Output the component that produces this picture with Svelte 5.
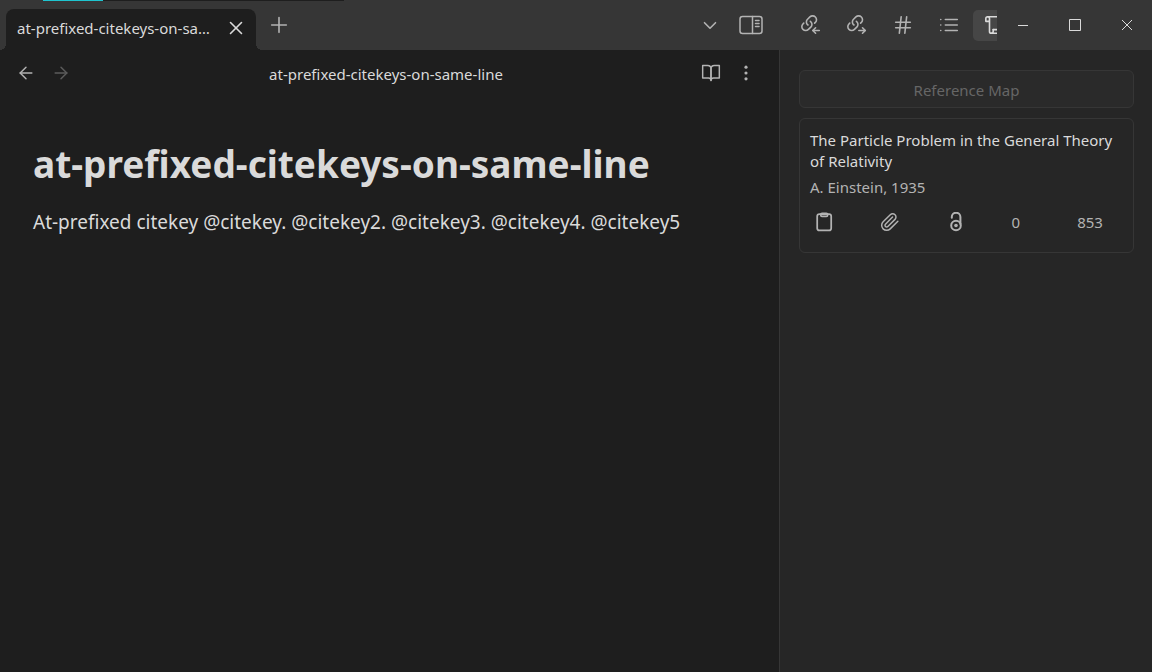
<script>
  const noteTitle = 'at-prefixed-citekeys-on-same-line';
  const body = 'At-prefixed citekey @citekey. @citekey2. @citekey3. @citekey4. @citekey5';

  const upperLink =
    'M8.7 12C8.22 11.64 7.81 11.18 7.52 10.65C7.23 10.13 7.05 9.55 7.01 8.95C6.97 8.35 7.06 7.75 7.27 7.18C7.48 6.62 7.81 6.11 8.25 5.69L10.8 3.18C11.6 2.41 12.67 1.99 13.79 2C14.9 2.01 15.97 2.45 16.76 3.23C17.54 4 17.99 5.05 18 6.15C18.01 7.25 17.58 8.31 16.81 9.09L15.9 10';
  const lowerLink =
    'M11.3 8C11.78 8.36 12.19 8.82 12.48 9.35C12.77 9.87 12.95 10.45 12.99 11.05C13.03 11.65 12.95 12.25 12.73 12.82C12.52 13.38 12.19 13.89 11.75 14.31L9.2 16.82C8.4 17.59 7.33 18.01 6.21 18C5.1 17.99 4.03 17.55 3.25 16.77C2.46 16 2.01 14.95 2 13.85C1.99 12.75 2.42 11.69 3.19 10.91L4.1 10';

  const panels = [
    { name: 'Backlinks', paths: [upperLink, lowerLink, 'M17 21L14 18L17 15', 'M21 18H14'] },
    { name: 'Outgoing links', paths: [upperLink, lowerLink, 'M18 21L21 18L18 15', 'M21 18H14'] },
    { name: 'Tags', paths: ['M4 9h16', 'M4 15h16', 'M10 3L8 21', 'M16 3l-2 18'] },
    { name: 'Outline', paths: ['M8 6h13', 'M8 12h13', 'M8 18h13', 'M3 6h.01', 'M3 12h.01', 'M3 18h.01'] },
    {
      name: 'References',
      active: true,
      paths: [
        'M10 17v2a2 2 0 0 1-4 0V5a2 2 0 0 0-4 0v3h3',
        'M22 17v2a2 2 0 0 1-2 2H8',
        'M19 17V5a2 2 0 0 0-2-2H4',
        'M22 17H10'
      ]
    }
  ];
</script>

{#snippet icon(paths, size)}
  <svg width={size} height={size} viewBox="0 0 24 24" aria-hidden="true">
    {#each paths as d}<path {d} />{/each}
  </svg>
{/snippet}

<div class="app">
  <header class="titlebar">
    <div class="progress"><span></span></div>
    <div class="tabs">
      <div class="tab">
        <span class="tab-title">{noteTitle}</span>
        <button class="tab-close" aria-label="Close tab">{@render icon(['M18 6L6 18', 'M6 6l12 12'], 22)}</button>
      </div>
      <button class="new-tab" aria-label="New tab">{@render icon(['M12 4v16', 'M4 12h16'], 22)}</button>
      <div class="tab-tools">
        <button aria-label="Tab list">{@render icon(['M6 9.5l6 6l6-6'], 22)}</button>
        <button aria-label="Toggle sidebar">
          <svg width="24" height="20" viewBox="0 0 24 20" aria-hidden="true">
            <rect x="1" y="1.5" width="22" height="17" rx="2.5" />
            <path d="M13.5 1.5v17M16.5 5.5h3.5M16.5 8.5h3.5M16.5 11.5h3.5" />
          </svg>
        </button>
      </div>
    </div>
    <div class="side-head">
      <nav class="panels" aria-label="Sidebar panels">
        {#each panels as p}
          <button class:active={p.active} aria-label={p.name}>{@render icon(p.paths, 22)}</button>
        {/each}
      </nav>
      <div class="window-controls">
        <button aria-label="Minimize"><svg width="12" height="12" viewBox="0 0 12 12"><path d="M1 6.5h10" /></svg></button>
        <button aria-label="Maximize"><svg width="12" height="12" viewBox="0 0 12 12"><path d="M.5 .5h11v11h-11z" /></svg></button>
        <button aria-label="Close"><svg width="12" height="12" viewBox="0 0 12 12"><path d="M1 1l10 10M11 1L1 11" /></svg></button>
      </div>
    </div>
  </header>

  <div class="workspace">
    <main>
      <div class="view-header">
        <div class="nav">
          <button aria-label="Back">{@render icon(['M19 12H5', 'M12 19l-7-7l7-7'], 20)}</button>
          <button aria-label="Forward" disabled>{@render icon(['M5 12h14', 'M12 5l7 7l-7 7'], 20)}</button>
        </div>
        <div class="view-title">{noteTitle}</div>
        <div class="nav end">
          <button aria-label="Reading view">{@render icon(['M2 3h6a4 4 0 0 1 4 4v14a3 3 0 0 0-3-3H2z', 'M22 3h-6a4 4 0 0 0-4 4v14a3 3 0 0 1 3-3h7z'], 20)}</button>
          <button aria-label="More options">
            <svg class="dots" width="20" height="20" viewBox="0 0 24 24" aria-hidden="true">
              <circle cx="12" cy="5" r="1.9" /><circle cx="12" cy="12" r="1.9" /><circle cx="12" cy="19" r="1.9" />
            </svg>
          </button>
        </div>
      </div>
      <article>
        <h1>{noteTitle}</h1>
        <p>{body}</p>
      </article>
    </main>

    <aside>
      <button class="map">Reference Map</button>
      <section class="card">
        <h2>The Particle Problem in the General Theory of Relativity</h2>
        <p>A. Einstein, 1935</p>
        <div class="actions">
          <button aria-label="Copy">
            <svg width="20" height="20" viewBox="0 0 20 20"><rect x="3.2" y="2" width="14" height="16.4" rx="2.2" /><rect x="6.8" y="1.4" width="6.8" height="3" rx="1.2" /></svg>
          </button>
          <button aria-label="Attachment">
            {@render icon(['M21.44 11.05l-9.19 9.19a6 6 0 0 1-8.49-8.49l8.57-8.57A4 4 0 1 1 18 8.84l-8.59 8.57a2 2 0 0 1-2.83-2.83l8.49-8.48'], 20)}
          </button>
          <button aria-label="Open access">
            <svg class="oa" width="20" height="20" viewBox="0 0 20 20"><circle cx="10" cy="13.5" r="4.8" /><path d="M5.8 5.8V5a4.2 4.2 0 0 1 8.6 0v7" /><circle class="dot" cx="10" cy="13.5" r="1.8" /></svg>
          </button>
          <span>0</span>
          <span>853</span>
        </div>
      </section>
    </aside>
  </div>
</div>

<style>
  :global(body) {
    margin: 0;
    background: #1e1e1e;
  }
  .app {
    --side: 373px;
    display: flex;
    flex-direction: column;
    min-height: 100vh;
    font-family: 'Noto Sans', 'Open Sans', sans-serif;
    font-size: 15px;
    color: #dadada;
    background: #1e1e1e;
  }
  button {
    display: flex;
    align-items: center;
    justify-content: center;
    padding: 0;
    border: 0;
    background: none;
    color: #b3b3b3;
    font: inherit;
  }
  svg {
    flex: none;
    fill: none;
    stroke: currentColor;
    stroke-width: 1.75;
    stroke-linecap: round;
    stroke-linejoin: round;
  }
  .titlebar {
    position: relative;
    display: flex;
    height: 50px;
    background: #363636;
  }
  .progress {
    position: absolute;
    top: 0;
    left: 43px;
    width: 301px;
    height: 1px;
    background: #1e1e1e;
  }
  .progress span {
    display: block;
    width: 60px;
    height: 1px;
    background: #1fc4cf;
  }
  .tabs {
    display: flex;
    flex: 1;
    align-items: flex-end;
    min-width: 0;
    padding-left: 6px;
  }
  .tab {
    position: relative;
    display: flex;
    align-items: center;
    box-sizing: border-box;
    width: 250px;
    height: 41px;
    padding: 0 8px 3px 11px;
    border-radius: 8px 8px 0 0;
    background: #1e1e1e;
  }
  .tab::before,
  .tab::after {
    content: '';
    position: absolute;
    bottom: 0;
    width: 6px;
    height: 6px;
  }
  .tab::before {
    right: 100%;
    background: radial-gradient(circle at 0 0, #363636 6px, #1e1e1e 6px);
  }
  .tab::after {
    left: 100%;
    background: radial-gradient(circle at 100% 0, #363636 6px, #1e1e1e 6px);
  }
  .tab-title {
    flex: 1;
    overflow: hidden;
    white-space: nowrap;
    text-overflow: ellipsis;
  }
  .tab-close {
    width: 24px;
    height: 24px;
    margin-left: 6px;
    color: #dadada;
  }
  .new-tab {
    width: 46px;
    height: 50px;
  }
  .tab-tools {
    display: flex;
    gap: 9px;
    margin-left: auto;
    padding-right: 12px;
  }
  .tab-tools button {
    width: 32px;
    height: 50px;
  }
  .tab-tools svg[width='24'] {
    stroke-width: 1.5;
  }
  .side-head {
    display: flex;
    flex: none;
    width: var(--side);
  }
  .panels {
    display: flex;
    flex: 1;
    gap: 3px;
    align-items: center;
    min-width: 0;
    margin-left: 10px;
    overflow: hidden;
  }
  .panels button {
    flex: none;
    width: 43px;
    height: 31px;
    border-radius: 5px;
  }
  .panels .active {
    background: #464646;
    color: #dadada;
  }
  .window-controls {
    display: flex;
    flex: none;
    width: 155px;
    overflow: hidden;
  }
  .window-controls button {
    flex: none;
    width: 52px;
    height: 50px;
    color: #dadada;
  }
  .window-controls svg {
    stroke-width: 1;
    stroke-linecap: butt;
    stroke-linejoin: miter;
  }
  .workspace {
    display: flex;
    flex: 1;
  }
  main {
    flex: 1;
    min-width: 0;
  }
  .view-header {
    display: flex;
    align-items: center;
    justify-content: space-between;
    height: 48px;
    padding: 0 16px;
  }
  .view-title {
    overflow: hidden;
    text-overflow: ellipsis;
    white-space: nowrap;
  }
  .nav {
    display: flex;
    gap: 15px;
  }
  .nav button {
    width: 20px;
    height: 46px;
    padding-bottom: 2px;
  }
  .nav button:disabled {
    color: #5c5c5c;
  }
  .nav.end {
    margin-right: 7px;
  }
  .dots {
    fill: currentColor;
    stroke: none;
  }
  article {
    padding: 40px 33px;
  }
  h1 {
    margin: 0;
    font-size: 37px;
    line-height: 52px;
    font-weight: 700;
  }
  article p {
    margin: 16px 0 0;
    font-size: 19px;
    line-height: 32px;
  }
  aside {
    flex: none;
    box-sizing: border-box;
    width: var(--side);
    padding: 20px 18px 20px 19px;
    border-left: 1px solid #363636;
    background: #262626;
  }
  .map {
    box-sizing: border-box;
    width: 100%;
    height: 38px;
    padding-top: 2px;
    border: 1px solid #363636;
    border-radius: 6px;
    background: #2a2a2a;
    color: #666;
  }
  .card {
    margin-top: 10px;
    padding: 11px 10px 8px;
    border: 1px solid #363636;
    border-radius: 6px;
  }
  .card h2 {
    margin: 0;
    font-size: 15px;
    line-height: 21px;
    font-weight: 400;
  }
  .card p {
    margin: 5px 0 0;
    line-height: 21px;
    color: #b3b3b3;
  }
  .actions {
    display: grid;
    grid-template-columns: repeat(5, 1fr);
    gap: 20px;
    align-items: center;
    height: 44px;
    padding: 2px 0 0 4px;
    color: #b3b3b3;
  }
  .actions button {
    justify-content: flex-start;
  }
  .oa {
    stroke-width: 2;
  }
  .oa .dot {
    fill: currentColor;
    stroke: none;
  }
</style>
